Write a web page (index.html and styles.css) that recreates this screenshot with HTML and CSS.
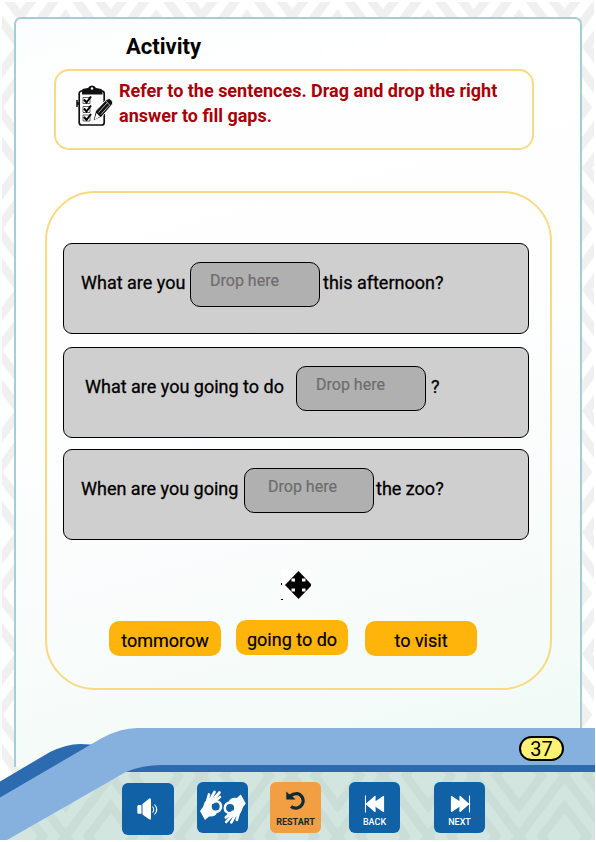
FILE: index.html
```html
<!DOCTYPE html>
<html lang="en">
<head>
<meta charset="utf-8">
<title>Activity</title>
<link rel="stylesheet" href="styles.css">
</head>
<body>
<div class="page">
  <svg class="backdrop" viewBox="0 0 596 842" aria-hidden="true">
    <defs>
      <g id="diamonds" fill="none">
        <path d="M0-60.750L45.350 0L0 60.750L-45.350 0Z"/>
        <path d="M0-30.400L22.700 0L0 30.400L-22.700 0Z"/>
      </g>
      <pattern id="weave" width="90.7" height="121.5" patternUnits="userSpaceOnUse" x="20.2" y="-14.2">
        <g stroke-width="8.500">
          <use href="#diamonds" x="45.35" y="60.75"/>
          <use href="#diamonds" x="0" y="0"/>
          <use href="#diamonds" x="90.7" y="0"/>
          <use href="#diamonds" x="0" y="121.5"/>
          <use href="#diamonds" x="90.7" y="121.5"/>
        </g>
      </pattern>
    </defs>
    <rect x="2" y="2" width="592" height="838" fill="url(#weave)"/>
  </svg>

  <main class="card">
    <h1 class="title">Activity</h1>
    <section class="task">
      <svg class="task-icon" viewBox="0 0 38 42">
        <rect x="3.2" y="6" width="25" height="34" rx="2.5" fill="#fff" stroke="#111" stroke-width="1.7"/>
        <path d="M6 9.5V5.5Q6 3.5 9 3.5L12 3Q13 .5 16 .5T20 3L24 3.7Q26.5 4.2 26.5 6V9.5Z" fill="#111"/>
        <circle cx="16" cy="3.5" r="1.2" fill="#fff"/>
        <path d="M1 15v7M2 17v3" stroke="#111" stroke-width="1.5"/>
        <g fill="none" stroke="#222" stroke-width=".7"><path d="M7 12.5h7v6H7zM7 21.5h7v6H7zM7 30h7v6H7z"/></g>
        <g fill="none" stroke="#000" stroke-width="2"><path d="M8 14.5l2.5 3 4.500-6M8 23.500l2.500 3 4.500-6M8 32l2.500 3 4.500-6"/></g>
        <path d="M17 36L19.500 26L30.500 14.500Q33.500 12 36 15.500Q38 18 35.500 20.500L25.500 32Z" fill="#111" stroke="#fff" stroke-width="1"/>
        <path d="M18.500 34.500L20.500 28L24.200 31.800Z" fill="#fff"/>
        <path d="M22.500 27.500L31 18M25 29.500L33 20.500M29.500 15.500L34.500 21" fill="none" stroke="#ddd" stroke-width=".8"/>
      </svg>
      <p class="task-text">Refer to the sentences. Drag and drop the right<br>answer to fill gaps.</p>
    </section>

    <section class="exercise">
      <div class="sentence s1"><span class="words">What are you</span><span class="drop">Drop here</span><span class="words">this afternoon?</span></div>
      <div class="sentence s2"><span class="words">What are you going to do</span><span class="drop">Drop here</span><span class="words">?</span></div>
      <div class="sentence s3"><span class="words">When are you going</span><span class="drop">Drop here</span><span class="words">the zoo?</span></div>
      <svg class="move" viewBox="0 0 30 30">
        <path fill="#fff" d="M0 0h30v30H0z"/>
        <path d="M17.500 1L31 15L17.500 29L4 15Z"/>
        <path fill="#fff" d="M10.500 8.500h3.500v3h-3.500zM21 8.500h3.500v3H21zM10.500 18.500h3.500v3h-3.500zM21 18.500h3.500v3H21z"/>
        <path d="M0 13h1v2H0zM0 29h2v1H0z"/>
      </svg>
      <div class="choices"><span class="choice">tommorow</span><span class="choice raised">going to do</span><span class="choice">to visit</span></div>
    </section>
  </main>

  <footer class="footer">
    <svg class="wave" viewBox="0 0 596 122" aria-hidden="true">
      <defs>
        <pattern id="weave-green" width="90.7" height="121.5" patternUnits="userSpaceOnUse" x="20.2" y="-14.2">
          <g stroke-width="8.500">
            <use href="#diamonds" x="45.35" y="60.75"/>
            <use href="#diamonds" x="0" y="0"/>
            <use href="#diamonds" x="90.7" y="0"/>
            <use href="#diamonds" x="0" y="121.5"/>
            <use href="#diamonds" x="90.7" y="121.5"/>
          </g>
        </pattern>
      </defs>
      <path fill="#fff" d="M0 80V122H596V50H130Z"/>
      <path fill="#d2e6df" d="M595 50H130L5 120H595Z"/>
      <g transform="translate(0 -720)"><path fill="url(#weave-green)" d="M595 770H130L5 840H595Z"/></g>
      <path fill="#2c6bb0" d="M0 61.500L50 32Q67 24 80 24L100 25L160 44H595V52H120L0 90Z"/>
      <path fill="#86b0de" d="M0 77.500L102 18Q121 8 137 8H595V45H162Q142 45 126 52L7 120H0Z"/>
    </svg>
    <div class="number-row"><span class="number">37</span></div>
    <nav class="nav">
      <button class="btn sound" aria-label="Sound">
        <svg width="52" height="52" viewBox="0 0 52 52"><path fill="#fff" d="M15.300 23.500Q15.300 22 16.500 22H19.500V30.800H16.500Q15.300 30.800 15.300 29.500ZM20.500 21L26 16.500Q29 14 29 17V35Q29 38 26 35.500L20.500 31.500Z"/><path fill="none" stroke="#fff" stroke-width="1.100" d="M30.500 23.500q2.500 3 0 6M32.500 21.500q4.500 5 0 10"/></svg>
      </button>
      <button class="btn sign" aria-label="Sign language">
        <svg width="51" height="51" viewBox="0 0 51 51">
          <g id="hand"><circle cx="18.700" cy="24.500" r="5.300" fill="none" stroke="#fff" stroke-width="2.600"/><path fill="none" stroke="#fff" stroke-width="2.700" stroke-linecap="round" d="M9 23L12 12.500M12 20L17.500 10M14 20L22.500 10.500M16 20.500L23 15"/><path fill="#fff" d="M7.800 20L13 16L18 19Q12 21 13.300 26Q15 30.500 20 30.500Q19 35 12 34.500L8 38L3 29L6 25Z"/></g>
          <use href="#hand" transform="rotate(180 25.900 25.200)"/>
        </svg>
      </button>
      <button class="btn restart"><svg width="22" height="22" viewBox="0 0 22 22"><path fill="none" stroke="#102a35" stroke-width="3.200" d="M4.500 6.500Q8 3.500 12 3.500A7.400 7.400 0 1 1 6 16.500"/><path fill="#102a35" d="M1.300 1.500L4 4L6.500 5.500L10.500 9.500H1.300Z"/></svg><span>RESTART</span></button>
      <button class="btn back"><svg width="22" height="20" viewBox="0 0 22 20"><path fill="#fff" stroke="#fff" stroke-width="1.200" stroke-linejoin="round" d="M2.500 10L11 2.500V17.500ZM8.500 10L19.500 2.500V17.500Z"/><path stroke="#fff" stroke-width="1.100" d="M1.500 1.500V18.500"/></svg><span>BACK</span></button>
      <button class="btn next"><svg width="22" height="20" viewBox="0 0 22 20"><path fill="#fff" stroke="#fff" stroke-width="1.200" stroke-linejoin="round" d="M19.500 10L11 2.500V17.500ZM13.500 10L2.500 2.500V17.500Z"/><path stroke="#fff" stroke-width="1.100" d="M20.500 1.500V18.500"/></svg><span>NEXT</span></button>
    </nav>
  </footer>
</div>
</body>
</html>
```
FILE: styles.css
```css
* { box-sizing: border-box; }
body { margin: 0; font-family: Roboto, sans-serif; color: #000; background: #fff; }
.page { position: relative; width: 596px; height: 842px; padding: 17px 14px 0; overflow: hidden; }
.backdrop { position: absolute; inset: 0; width: 596px; height: 842px; }
#weave g { stroke: #f0f0f0; }
#weave-green g { stroke: #caddd6; }
.card {
  position: relative; width: 568px; height: 750px; padding: 17px 0 0 31px;
  border: 2px solid #a4ced4; border-bottom: 0; border-radius: 7px 7px 0 0;
  background: linear-gradient(165deg, #fbfefe 0, #fff 15%, #fefeff 45%, #f8fcfb 72%, #f0faf6 100%);
}
.title { margin: 0 0 0 79px; height: 33px; font-size: 22px; line-height: 22px; font-weight: 700; }
.task {
  display: flex; width: 480px; height: 81px; margin-left: 7px; padding: 14px 0 0 20px;
  border: 2px solid #f8da83; border-radius: 15px; background: #fefefe;
}
.task-icon { width: 38px; height: 42px; flex: none; }
.task-text { margin: -7px 0 0 5px; font-size: 18px; line-height: 25px; font-weight: 700; color: #a90008; white-space: nowrap; }
.exercise {
  width: 507px; height: 499px; margin: 41px 0 0 -2px; padding: 50px 0 0 16px;
  border: 2px solid #f8da83; border-radius: 50px;
}
.sentence {
  display: flex; align-items: flex-start; width: 466px; height: 91px; margin-bottom: 13px; padding: 18px 0 0 17px;
  border: 1px solid #000; border-radius: 9px; background: #cfcfcf; font-size: 18px; white-space: nowrap;
}
.words { line-height: 42px; -webkit-text-stroke: .3px #000; }
.s1 .words:first-child { width: 109px; }
.s2 { margin-bottom: 11px; padding-left: 21px; }
.s2 .words:first-child { width: 211px; }
.s2 .words:last-child { margin-left: 2px; }
.s3 .words:first-child { width: 163px; }
.drop {
  width: 130px; height: 45px; margin-right: 3px; padding-left: 19px; border: 1px solid #000; border-radius: 10px;
  background: #b0b0b0; color: #6d6d6d; font-size: 16px; line-height: 35px; -webkit-text-stroke: .2px #6d6d6d;
}
.s3 .drop { padding-left: 23px; margin-right: 2px; }
.move { display: block; width: 30px; height: 30px; margin: 30px 0 0 218px; }
.choices { display: flex; margin: 20px 0 0 46px; }
.choice {
  width: 112px; height: 35px; margin-top: 1px; border-radius: 10px; background: #ffb40b;
  font-size: 18px; line-height: 39px; text-align: center; -webkit-text-stroke: .2px #000;
}
.raised { margin: 0 17px 0 15px; }
.footer { position: absolute; left: 0; bottom: 0; width: 596px; height: 122px; }
.wave { position: absolute; inset: 0; width: 596px; height: 122px; }
.number-row { position: relative; display: flex; justify-content: flex-end; padding: 16px 32px 0 0; height: 62px; }
.number {
  width: 45px; height: 25px; border: 2px solid #000; border-radius: 13px; background: #fff173;
  font-size: 20px; line-height: 22px; text-align: center;
}
.nav { position: relative; display: flex; padding-left: 122px; align-items: flex-start; }
.btn {
  display: flex; flex-direction: column; align-items: center; width: 51px; height: 51px; padding: 0;
  border: 0; border-radius: 6px; background: #1061a5; color: #fff; font: 500 9px/10px Roboto, sans-serif;
}
.sound { width: 52px; height: 52px; margin: 1px 23px 0 0; }
.restart { margin-left: 22px; padding-top: 8px; background: #f29e42; color: #102a35; font-weight: 700; }
.restart span { margin-top: 5px; }
.back { margin-left: 28px; padding-top: 12px; }
.next { margin-left: 34px; padding-top: 12px; }
.back span, .next span { margin-top: 3px; }
```
